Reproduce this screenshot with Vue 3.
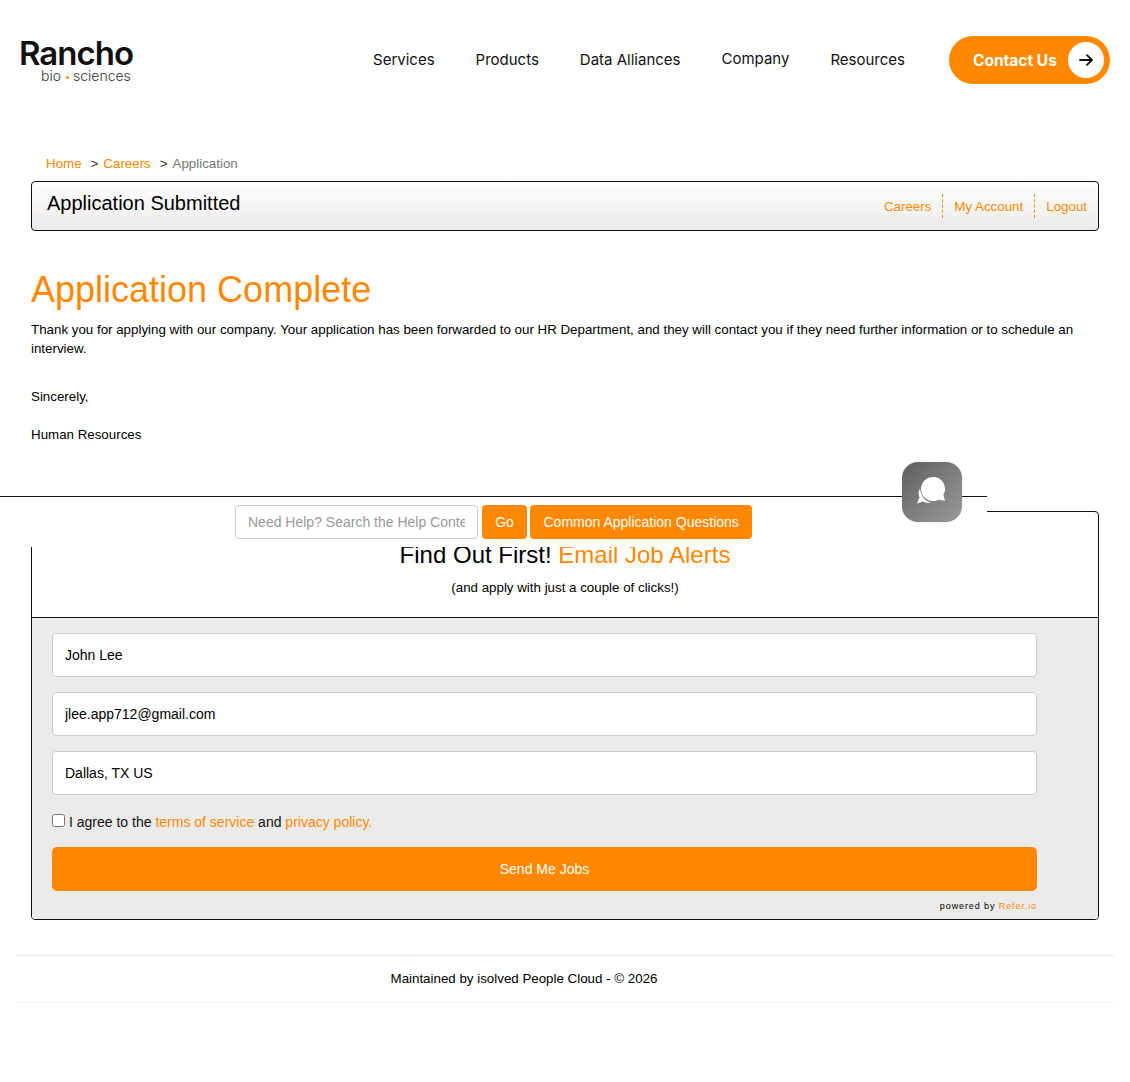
<template>
  <div class="page">
    <!-- Header -->
    <header class="site-header">
      <a class="logo" href="#">
        <span class="logo-name">Rancho</span>
        <span class="logo-sub">bio<i class="logo-dot"></i>sciences</span>
      </a>
      <nav class="main-nav">
        <a v-for="item in navItems" :key="item" href="#" :class="{ raised: item === 'Company' }">{{ item }}</a>
      </nav>
      <a class="contact-btn" href="#">
        <span>Contact Us</span>
        <span class="contact-arrow">
          <svg width="14" height="12" viewBox="0 0 14 12" fill="none" stroke="#111" stroke-width="1.8" stroke-linecap="round" stroke-linejoin="round">
            <path d="M1 6h12M8 1.200 13 6 8 10.800" />
          </svg>
        </span>
      </a>
    </header>

    <main class="content">
      <div class="breadcrumb">
        <a href="#">Home</a>
        <span class="crumb-sep">&gt;</span>
        <a href="#">Careers</a>
        <span class="crumb-sep">&gt;</span>
        <span class="crumb-current">Application</span>
      </div>

      <div class="title-bar">
        <h2>Application Submitted</h2>
        <div class="title-links">
          <a href="#">Careers</a>
          <a href="#">My Account</a>
          <a href="#">Logout</a>
        </div>
      </div>

      <h1>Application Complete</h1>
      <p class="thanks">Thank you for applying with our company. Your application has been forwarded to our HR Department, and they will contact you if they need further information or to schedule an interview.</p>
      <p class="sign">Sincerely,</p>
      <p class="sign">Human Resources</p>
    </main>

    <!-- Help search strip, sits over the top of the alerts box -->
    <div class="help-strip">
      <input class="help-input" type="text" placeholder="Need Help? Search the Help Content" />
      <button class="help-btn go">Go</button>
      <button class="help-btn">Common Application Questions</button>
      <div class="chat-badge">
        <svg width="36" height="34" viewBox="0 0 36 34">
          <path fill="#fff" d="M6 13.500C4.500 16 4.200 19.500 5.500 22.500L3 28.500l5.500-2c2.500 1.300 5.500 1.700 8.500 1-4.500-.5-10-5-11-14z" />
          <path fill="#fff" d="M19 2a12 12 0 0 0 0 24c2 0 3.800-.5 5.400-1.300l6.600 1-1.600-5.700A12 12 0 0 0 19 2z" />
        </svg>
      </div>
    </div>

    <section class="alerts-box">
      <div class="alerts-head">
        <h3>Find Out First! <span>Email Job Alerts</span></h3>
        <p>(and apply with just a couple of clicks!)</p>
      </div>
      <form class="alerts-form" @submit.prevent>
        <input v-for="field in fields" :key="field" class="field" type="text" :value="field" />
        <label class="agree">
          <input type="checkbox" />
          <span>I agree to the <a href="#">terms of service</a> and <a href="#">privacy policy.</a></span>
        </label>
        <button class="send-btn">Send Me Jobs</button>
        <div class="powered">powered by <a href="#">Refer.io</a></div>
      </form>
    </section>

    <footer class="site-footer">Maintained by isolved People Cloud - © 2026</footer>
  </div>
</template>

<script setup>
const navItems = ['Services', 'Products', 'Data Alliances', 'Company', 'Resources'];
const fields = ['John Lee', 'jlee.app712@gmail.com', 'Dallas, TX US'];
</script>

<style>
body {
  background: #fff;
}
</style>

<style scoped>
.page {
  font-family: "Liberation Sans", Arial, sans-serif;
  font-size: 13.33px;
  color: #000;
  min-height: 1082px;
}

a {
  color: #ff8800;
  text-decoration: none;
}

/* Header */
.site-header {
  display: flex;
  align-items: center;
  height: 120px;
  padding: 0 20px;
}

.logo {
  display: flex;
  flex-direction: column;
  color: #111;
  font-family: Inter, sans-serif;
  margin-left: -1px;
}

.logo-name {
  font-size: 33px;
  font-weight: 600;
  letter-spacing: -1px;
  line-height: 30px;
}

.logo-sub {
  font-size: 14px;
  font-weight: 300;
  line-height: 15px;
  color: #333;
  padding-left: 22px;
}

.logo-dot {
  display: inline-block;
  width: 3px;
  height: 3px;
  margin: 0 4.5px 2px;
  border-radius: 50%;
  background: #ff8800;
}

.main-nav {
  display: flex;
  gap: 41px;
  margin: 0 44px 2px auto;
  font-family: Inter, sans-serif;
  font-size: 15px;
}

.main-nav a {
  color: #111;
}

.main-nav .raised {
  margin-top: -1px;
}

.contact-btn {
  display: flex;
  align-items: center;
  justify-content: space-between;
  width: 161px;
  height: 48px;
  box-sizing: border-box;
  padding: 0 6px 0 24px;
  border-radius: 24px;
  background: #ff8800;
  color: #fff;
  font-family: Inter, sans-serif;
  font-size: 15.5px;
  font-weight: 700;
}

.contact-arrow {
  display: flex;
  align-items: center;
  justify-content: center;
  width: 36px;
  height: 36px;
  border-radius: 50%;
  background: #fff;
}

/* Main content */
.content {
  padding: 35px 31px 0;
}

.breadcrumb {
  padding-left: 15px;
  line-height: 17px;
  margin-bottom: 9px;
  color: #333;
}

.crumb-sep {
  margin: 0 5px 0 9px;
}

.crumb-current {
  color: #777;
}

.title-bar {
  display: flex;
  align-items: center;
  justify-content: space-between;
  height: 50px;
  box-sizing: border-box;
  padding: 0 0 0 15px;
  border: 1px solid #111;
  border-radius: 4px;
  background: linear-gradient(#fff, #ebebeb);
}

.title-bar h2 {
  margin: -6px 0 0;
  font-size: 20px;
  font-weight: 400;
}

.title-links {
  display: flex;
  align-items: center;
  padding-right: 11px;
}

.title-links a {
  padding: 5px 11px 3px;
  line-height: 16px;
  border-left: 1px dashed #ff8800;
}

.title-links a:first-child {
  border-left: none;
}

.title-links a:last-child {
  padding-right: 0;
}

h1 {
  margin: 38px 0 0;
  font-size: 36px;
  font-weight: 400;
  line-height: 42px;
  color: #ff8800;
}

.thanks {
  margin: 9px 0 0;
  line-height: 19px;
}

.sign {
  margin: 0;
  line-height: 19px;
  padding-top: 19px;
}

.thanks + .sign {
  padding-top: 29px;
}

/* Help strip */
.help-strip {
  position: relative;
  z-index: 2;
  display: flex;
  align-items: flex-start;
  gap: 4px;
  width: 987px;
  height: 51px;
  box-sizing: border-box;
  margin-top: 52px;
  padding: 8px 0 0 235px;
  border-top: 1px solid #111;
  background: #fff;
}

.help-input {
  width: 243px;
  height: 34px;
  box-sizing: border-box;
  padding: 0 12px;
  border: 1px solid #ccc;
  border-radius: 4px;
  font: 14px "Liberation Sans", Arial, sans-serif;
}

.help-input::placeholder {
  color: #999;
}

.help-btn {
  height: 34px;
  padding: 0 13.5px;
  border: none;
  border-radius: 4px;
  background: #ff8800;
  color: #fff;
  font: 14px "Liberation Sans", Arial, sans-serif;
}

.help-btn.go {
  width: 45px;
  padding: 0;
  margin-right: -1px;
}

.chat-badge {
  position: absolute;
  top: -35px;
  left: 902px;
  display: flex;
  align-items: center;
  justify-content: center;
  width: 60px;
  height: 60px;
  border-radius: 16px;
  background: linear-gradient(135deg, #5f5f5f, #9a9a9a);
  box-shadow: 0 0 2px rgba(0, 0, 0, 0.15);
}

/* Alerts box */
.alerts-box {
  position: relative;
  margin: -36px 31px 0;
  height: 409px;
  box-sizing: border-box;
  border: 1px solid #111;
  border-radius: 4px;
  display: flex;
  flex-direction: column;
}

.alerts-head {
  height: 106px;
  box-sizing: border-box;
  padding-top: 29px;
  border-bottom: 1px solid #111;
  text-align: center;
}

.alerts-head h3 {
  margin: 0;
  font-size: 24px;
  font-weight: 400;
  line-height: 28px;
}

.alerts-head h3 span {
  color: #ff8800;
}

.alerts-head p {
  margin: 11px 0 0;
  line-height: 16px;
}

.alerts-form {
  flex: 1;
  display: flex;
  flex-direction: column;
  padding: 15px 61px 0 20px;
  background: #ebebeb;
  border-radius: 0 0 3px 3px;
}

.field {
  height: 44px;
  box-sizing: border-box;
  margin-bottom: 15px;
  padding: 0 12px;
  border: 1px solid #ccc;
  border-radius: 4px;
  background: #fff;
  color: #000;
  font: 14px "Liberation Sans", Arial, sans-serif;
}

.agree {
  display: flex;
  align-items: flex-start;
  height: 33px;
  margin-top: 4px;
  font-size: 14px;
  line-height: 16px;
  color: #111;
}

.agree input {
  width: 13px;
  height: 13px;
  margin: 0 4px 0 0;
}

.send-btn {
  height: 44px;
  border: none;
  border-radius: 5px;
  background: #ff8800;
  color: #fff;
  font: 14px "Liberation Sans", Arial, sans-serif;
}

.powered {
  margin: 9px 0 0;
  text-align: right;
  font-size: 9px;
  line-height: 12px;
  letter-spacing: 0.9px;
}

/* Footer */
.site-footer {
  height: 48px;
  box-sizing: border-box;
  margin: 35px 16px 0;
  padding-right: 82px;
  border-top: 1px solid #e4e4e4;
  border-bottom: 1px solid #f2f2f2;
  text-align: center;
  line-height: 45px;
}
</style>
